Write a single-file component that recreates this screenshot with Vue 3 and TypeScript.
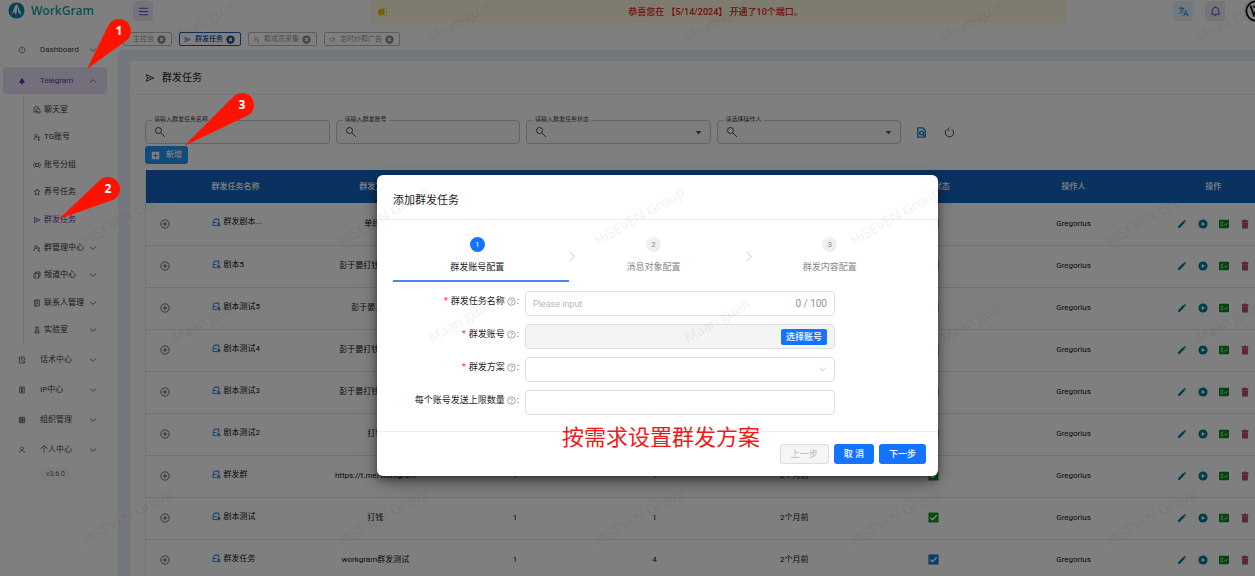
<script setup lang="ts">
import { ref } from 'vue'

interface MenuItem { text: string; icon: string; more?: boolean; active?: boolean }
interface Task { name: string; plan: string; accounts: string; targets: string; time: string; done: string }
interface Pin { label: string; tip: [number, number]; centre: [number, number] }

const icons: Record<string, string> = {
  gauge: 'M12 3a9 9 0 1 0 0.1 0M12 7v6',
  chat: 'M16 17H6l-3 3V10a7 7 0 0 1 14-2M9 14a6 6 0 0 1 12 0v7h-6a6 6 0 0 1-6-7',
  users: 'M9 4a4 4 0 1 0 .1 0M3 21v-3a5 5 0 0 1 9-3M17 11a2 2 0 1 0 .1 0M14 21h7M17 16v5',
  group: 'M2 3l7 6M22 3l-7 6M2 21l7-6M22 21l-7-6M8 8h8v8H8zM2 9v6M22 9v6',
  star: 'M12 3l2.800 6 6.200.8-4.600 4.400 1.200 6.300L12 17.400 6.400 20.500l1.200-6.300L3 9.800 9.200 9z',
  send: 'M3 4l18 8-18 8 3-8zM6 12h8',
  copy: 'M8 7V3h13v14h-4M3 7h14v14H3zM7 11v6',
  book: 'M5 3h14v18H5zM9 3v18M12 8h4M12 13h4',
  flask: 'M8 3h8M9 3v7L5 21h14l-4-11V3M8 15h8',
  script: 'M4 3h15v9M4 3v18h8M8 8h7M8 12h4M17 14a3 3 0 1 0 .1 0M13 21h8',
  ip: 'M5 3h14v18H5zM8 8h8M8 12h8M8 16h8M12 3v18',
  org: 'M4 4h16v16H4zM4 9h16M4 14h16M9 4v16M14 4v16',
  person: 'M12 3a4.500 4.500 0 1 0 .1 0M5 21c0-5 3-8 7-8s7 3 7 8',
  ad: 'M3 9h4l9-5v16l-9-5H3zM19 9v6',
}

const children: MenuItem[] = [
  { text: '聊天室', icon: 'chat' },
  { text: 'TG账号', icon: 'users' },
  { text: '账号分组', icon: 'group' },
  { text: '养号任务', icon: 'star' },
  { text: '群发任务', icon: 'send', active: true },
  { text: '群管理中心', icon: 'users', more: true },
  { text: '频道中心', icon: 'copy', more: true },
  { text: '联系人管理', icon: 'book', more: true },
  { text: '实验室', icon: 'flask', more: true },
]
const sections: MenuItem[] = [
  { text: '话术中心', icon: 'script' },
  { text: 'IP中心', icon: 'ip' },
  { text: '组织管理', icon: 'org' },
  { text: '个人中心', icon: 'person' },
]
const tabs: MenuItem[] = [
  { text: '主控台', icon: '' },
  { text: '群发任务', icon: 'send', active: true },
  { text: '群成员采集', icon: 'users' },
  { text: '定时炒群广告', icon: 'ad' },
]
const filters = [
  { id: 'f-name', label: '请输入群发任务名称', select: false },
  { id: 'f-account', label: '请输入群发账号', select: false },
  { id: 'f-state', label: '请输入群发任务状态', select: true },
  { id: 'f-operator', label: '请选择操作人', select: true },
]
const heads = ['群发方案', '账号数量', '对象数量', '创建时间', '任务状态', '操作人', '操作']
const task = (name: string, plan: string, targets = '1', done = 'green'): Task =>
  ({ name, plan, accounts: '1', targets, time: '2个月前', done })
const tasks: Task[] = [
  task('群发剧本...', '单线...'),
  task('剧本5', '彭于晏打钱打钱打钱'),
  task('剧本测试5', '彭于晏，打钱'),
  task('剧本测试4', '彭于晏打钱打钱打钱'),
  task('剧本测试3', '彭于晏打钱打钱打钱'),
  task('剧本测试2', '打钱'),
  task('群发群', 'https://t.me/workgram'),
  task('剧本测试', '打钱'),
  task('群发任务', 'workgram群发测试', '4', 'blue'),
]
const steps = ['群发账号配置', '消息对象配置', '群发内容配置']

const taskName = ref('')
const limit = ref('')

const pins: Pin[] = [
  { label: '1', tip: [87, 69], centre: [119, 31] },
  { label: '2', tip: [59, 219], centre: [108, 189] },
  { label: '3', tip: [184, 146], centre: [242, 105] },
]
// Teardrop: two tangents from the tip, closed by the far arc of the circle.
function pinPath({ tip, centre }: Pin, r = 12): string {
  const dx = tip[0] - centre[0]
  const dy = tip[1] - centre[1]
  const base = Math.atan2(dy, dx)
  const spread = Math.acos(r / Math.hypot(dx, dy))
  const at = (a: number) => `${centre[0] + r * Math.cos(a)} ${centre[1] + r * Math.sin(a)}`
  return `M${tip[0]} ${tip[1]}L${at(base + spread)}A${r} ${r} 0 1 1 ${at(base - spread)}Z`
}
</script>

<template>
  <div class="app">
    <header class="topbar">
      <a href="#" class="brand">
        <svg class="logo" viewBox="0 0 18 18"><circle cx="9" cy="9" r="8.500" fill="#0d84ae" /><path d="M3.500 14L8 3h2.500l-2 11-2-4zM10 3l4.500 10.500-3.500-2z" fill="#fff" /></svg>
        <span>WorkGram</span>
      </a>
      <button class="square violet" aria-label="菜单"><svg viewBox="0 0 24 24" class="line"><path d="M2 5h20M2 12h20M2 19h20" /></svg></button>
      <div class="notice">
        <svg viewBox="0 0 24 24"><path d="M2 9l4-3h4l5-2v15l-5-2H8v3H5v-4H2z" fill="#f0bd00" /><path d="M18 6l3-2M18 12h4M18 18l3 2" stroke="#f0bd00" stroke-width="2" /></svg>
        <p>恭喜您在 【5/14/2024】 开通了10个端口。</p>
      </div>
      <div class="tools">
        <button class="square blue" aria-label="语言"><svg viewBox="0 0 24 24" class="line"><path d="M2 5h12M8 2v3M12 5c-1 5-5 9-9 11M5 8c1 4 4 6 7 8M12 22l5-12 5 12M14 18h6" /></svg></button>
        <button class="square violet" aria-label="通知"><svg viewBox="0 0 24 24" class="line"><path d="M3 18h18l-2-3V10a7 7 0 0 0-14 0v5zM10 21h4M12 1v2" /></svg></button>
        <button class="avatar" aria-label="账户"><svg viewBox="0 0 24 24"><circle cx="12" cy="12" r="10.500" fill="#fff" stroke="#111" stroke-width="2" /><path d="M6 6l4 12M9 8c4-3 6 1 3 4s1 6 4 4" fill="none" stroke="#111" stroke-width="2" /></svg></button>
      </div>
    </header>

    <nav class="tabs">
      <a v-for="t in tabs" :key="t.text" href="#" class="tab" :class="{ on: t.active }">
        <svg v-if="t.icon" viewBox="0 0 24 24" class="line"><path :d="icons[t.icon]" /></svg>
        <span>{{ t.text }}</span>
        <svg class="close" viewBox="0 0 24 24"><circle cx="12" cy="12" r="11" fill="currentColor" /><path d="M8 8l8 8M16 8l-8 8" stroke="#fff" stroke-width="3" /></svg>
      </a>
    </nav>

    <div class="body">
      <aside class="side">
        <a href="#" class="item"><svg viewBox="0 0 24 24" class="line"><path :d="icons.gauge" /></svg><span>Dashboard</span><svg viewBox="0 0 24 24" class="line chev"><path d="M3 8l9 8 9-8" /></svg></a>
        <a href="#" class="item on"><svg viewBox="0 0 24 24"><path d="M12 2l6 9 2 7H4l2-7zM9 19h6v3H9z" fill="currentColor" /></svg><span>Telegram</span><svg viewBox="0 0 24 24" class="line chev"><path d="M3 16l9-8 9 8" /></svg></a>
        <div class="children">
          <a v-for="c in children" :key="c.text" href="#" class="child" :class="{ on: c.active }">
            <svg viewBox="0 0 24 24" class="line"><path :d="icons[c.icon]" /></svg><span>{{ c.text }}</span>
            <svg v-if="c.more" viewBox="0 0 24 24" class="line chev"><path d="M3 8l9 8 9-8" /></svg>
          </a>
        </div>
        <a v-for="s in sections" :key="s.text" href="#" class="item">
          <svg viewBox="0 0 24 24" class="line"><path :d="icons[s.icon]" /></svg><span>{{ s.text }}</span>
          <svg viewBox="0 0 24 24" class="line chev"><path d="M3 8l9 8 9-8" /></svg>
        </a>
        <span class="version">v3.6.0</span>
      </aside>

      <main class="main">
        <section class="card">
          <h1 class="title"><svg viewBox="0 0 24 24" class="line"><path :d="icons.send" /></svg>群发任务</h1>
          <div class="content">
            <form class="filters" @submit.prevent>
              <div v-for="f in filters" :key="f.id" class="filter">
                <label :for="f.id">{{ f.label }}</label>
                <svg viewBox="0 0 24 24" class="line"><circle cx="9" cy="9" r="6" /><path d="M14 14l8 8" /></svg>
                <select v-if="f.select" :id="f.id"><option></option></select>
                <input v-else :id="f.id" type="text" />
                <svg v-if="f.select" class="caret" viewBox="0 0 10 10"><path d="M1 3h8L5 8z" fill="#555" /></svg>
              </div>
              <button class="plain find" aria-label="搜索"><svg viewBox="0 0 24 24"><path d="M5 2h10l5 5v15H4V2z" fill="none" stroke="#1583c7" stroke-width="3" /><circle cx="12" cy="13" r="4" fill="none" stroke="#1583c7" stroke-width="3" /><path d="M15 16l5 5" stroke="#1583c7" stroke-width="3" /></svg></button>
              <button class="plain" aria-label="重置"><svg viewBox="0 0 24 24" class="line"><path d="M7 5a9 9 0 1 0 10 0M12 1L8 5l4 4" /></svg></button>
            </form>
            <button class="add"><svg viewBox="0 0 24 24"><path d="M2 2h20v20H2z" fill="#fff" /><path d="M12 7v10M7 12h10" stroke="#2196f3" stroke-width="3" /></svg>新增</button>
            <div class="scroll">
              <table>
                <colgroup><col class="c-open" /><col class="c-name" /><col v-for="h in heads" :key="h" /></colgroup>
                <thead><tr><th></th><th class="name">群发任务名称</th><th v-for="h in heads" :key="h">{{ h }}</th></tr></thead>
                <tbody>
                  <tr v-for="(t, i) in tasks" :key="i">
                    <td><button class="plain open" aria-label="展开"><svg viewBox="0 0 24 24" class="line"><circle cx="12" cy="12" r="10" /><path d="M12 7v10M7 12h10" /></svg></button></td>
                    <td class="name"><div><svg viewBox="0 0 24 24"><path d="M6 3h12v9M3 12v8h10M6 3L3 12h9" fill="none" stroke="#4c8be0" stroke-width="3" /><path d="M14 13h7l2 9h-9z" fill="#4c8be0" /></svg>{{ t.name }}</div></td>
                    <td>{{ t.plan }}</td>
                    <td>{{ t.accounts }}</td>
                    <td>{{ t.targets }}</td>
                    <td>{{ t.time }}</td>
                    <td><svg class="state" :class="t.done" viewBox="0 0 24 24"><rect x="1" y="1" width="22" height="22" rx="2" fill="currentColor" /><path d="M5 12l5 5 9-10" fill="none" stroke="#fff" stroke-width="3" /></svg></td>
                    <td>Gregorius</td>
                    <td>
                      <div class="actions">
                        <button class="plain" aria-label="编辑"><svg viewBox="0 0 24 24"><path d="M2 22l1-5L15 5l4 4L7 21zM16 4l2-2 4 4-2 2z" fill="#007a94" /></svg></button>
                        <button class="plain" aria-label="启动"><svg viewBox="0 0 24 24"><circle cx="12" cy="12" r="11" fill="#007a94" /><path d="M9 7l8 5-8 5z" fill="#fff" /></svg></button>
                        <button class="plain" aria-label="明细"><svg viewBox="0 0 24 24"><rect y="2" width="24" height="20" rx="2" fill="#008a1c" /><path d="M4 8h6M4 12h6M4 16h6M13 12l3 3 5-6" fill="none" stroke="#cfe8cf" stroke-width="2" /></svg></button>
                        <button class="plain" aria-label="删除"><svg viewBox="0 0 24 24"><path d="M4 3h5l1-2h4l1 2h5v4H4zM5 8h14v15H5z" fill="#b8486a" /></svg></button>
                      </div>
                    </td>
                  </tr>
                </tbody>
              </table>
            </div>
          </div>
        </section>
      </main>
    </div>

    <div class="mask">
      <div class="dialog" role="dialog" aria-labelledby="dialog-title">
        <h2 id="dialog-title">添加群发任务</h2>
        <ol class="steps">
          <li v-for="(s, i) in steps" :key="s" :class="{ on: i === 0 }">
            <b>{{ i + 1 }}</b><span>{{ s }}</span>
            <svg v-if="i < 2" viewBox="0 0 10 16"><path d="M2 2l6 6-6 6" /></svg>
          </li>
        </ol>
        <form class="form" @submit.prevent>
          <label for="d-name"><i>*</i>群发任务名称<svg viewBox="0 0 24 24" class="line"><circle cx="12" cy="12" r="10" /><path d="M9 10a3 3 0 1 1 3 3v1M12 16v2" /></svg>:</label>
          <div class="field"><input id="d-name" v-model="taskName" type="text" maxlength="100" placeholder="Please input" /><span class="count">{{ taskName.length }} / 100</span></div>
          <label for="d-account"><i>*</i>群发账号<svg viewBox="0 0 24 24" class="line"><circle cx="12" cy="12" r="10" /><path d="M9 10a3 3 0 1 1 3 3v1M12 16v2" /></svg>:</label>
          <div class="field off"><input id="d-account" type="text" disabled /><button class="pick" type="button">选择账号</button></div>
          <label for="d-plan"><i>*</i>群发方案<svg viewBox="0 0 24 24" class="line"><circle cx="12" cy="12" r="10" /><path d="M9 10a3 3 0 1 1 3 3v1M12 16v2" /></svg>:</label>
          <div class="field"><select id="d-plan"><option></option></select><svg class="drop" viewBox="0 0 24 24"><path d="M4 7l8 9 8-9" /></svg></div>
          <label for="d-limit">每个账号发送上限数量<svg viewBox="0 0 24 24" class="line"><circle cx="12" cy="12" r="10" /><path d="M9 10a3 3 0 1 1 3 3v1M12 16v2" /></svg>:</label>
          <div class="field"><input id="d-limit" v-model="limit" type="text" /></div>
        </form>
        <footer>
          <button disabled>上一步</button>
          <button>取 消</button>
          <button>下一步</button>
        </footer>
        <p class="remark">按需求设置群发方案</p>
      </div>
    </div>

    <svg class="overlay" aria-hidden="true">
      <defs>
        <pattern id="mark" width="256" height="300" patternUnits="userSpaceOnUse">
          <text transform="translate(86 246) rotate(-30)">HiSEVEN Group</text>
          <text transform="translate(176 43) rotate(-30)">Maan guan</text>
        </pattern>
      </defs>
      <rect width="100%" height="100%" fill="url(#mark)" />
      <g v-for="p in pins" :key="p.label" class="pin">
        <path :d="pinPath(p)" />
        <text :x="p.centre[0]" :y="p.centre[1] + 4">{{ p.label }}</text>
      </g>
    </svg>
  </div>
</template>

<style>
body { margin: 0; overflow: hidden; }
</style>

<style scoped>
* { box-sizing: border-box; }
.app { position: relative; display: flex; flex-direction: column; height: 100vh; overflow: hidden; background: #fff; color: #222; font: 8px/12px Roboto, "Noto Sans CJK SC", sans-serif; }
a { color: inherit; text-decoration: none; }
button { font: inherit; border: 0; padding: 0; cursor: pointer; }
input, select { font: inherit; flex: 1; min-width: 0; height: 100%; padding: 0; border: 0; outline: 0; background: transparent; appearance: none; }
svg { width: 9px; height: 9px; flex: none; }
.line { fill: none; stroke: currentColor; stroke-width: 2; }
.plain { display: grid; place-items: center; background: none; color: #333; }

.topbar { display: flex; align-items: flex-start; flex: none; height: 28px; }
.brand { display: flex; align-items: center; gap: 6px; width: 125px; height: 21px; padding-left: 8px; color: #14a394; font: 600 12px/20px "Open Sans", sans-serif; }
.logo { width: 17px; height: 17px; }
.square { display: grid; place-items: center; width: 20px; height: 20px; margin-top: 1px; border-radius: 4px; }
.square svg { width: 11px; height: 11px; }
.violet { color: #6a35b8; background: #ede7f6; }
.blue { color: #1e7fdc; background: #e3f2fd; }
.topbar > .square { margin-left: 8px; }
.notice { display: flex; align-items: center; flex: 1; height: 23px; margin-left: 218px; padding: 0 6px; background: #fdf8dc; color: #e82020; font-size: 9px; font-weight: 500; }
.notice svg { width: 12px; height: 12px; }
.notice p { flex: 1; margin: 0 18px 0 0; text-align: center; }
.tools { display: flex; gap: 12px; width: 189px; padding-left: 107px; }
.tools .square { flex: none; }
.avatar { flex: none; width: 24px; height: 22px; background: #e3f2fd; margin-left: 7px; border-radius: 8px; }
.avatar svg { width: 24px; height: 22px; }

.tabs { display: flex; gap: 7px; flex: none; height: 22px; padding: 4px 0 4px 123px; font-size: 7px; color: #999; }
.tab { display: flex; align-items: center; gap: 4px; height: 14px; padding: 0 5px 0 4px; border: 1px solid #bbb; border-radius: 2px; }
.tab:first-child { padding-left: 9px; }
.tab svg { width: 7px; height: 7px; }
.tab .close { width: 9px; height: 9px; margin-left: -1px; color: #888; }
.tab.on, .tab.on .close { color: #124e96; border-color: #1f5fae; }
.tab.on { font-weight: 500; }

.body { display: flex; flex: 1; min-height: 0; }
.side { display: flex; flex-direction: column; flex: none; width: 118px; margin-top: -15px; padding: 0 11px 0 3px; color: #444; }
.item { display: grid; grid-template-columns: 22px 1fr 8px; align-items: center; flex: none; height: 30px; padding: 0 10px 0 15px; border-radius: 4px; }
.item svg { width: 8px; height: 8px; }
.item.on { height: 27px; margin-top: 2px; color: #5e35b1; background: #e6def6; }
.children { display: grid; grid-auto-rows: 1fr; flex: none; height: 248px; margin: 2px 0 1px 20px; border-left: 1px solid #e6e0f0; }
.child { display: grid; grid-template-columns: 8px 1fr 8px; align-items: center; gap: 3px; padding: 0 10px 0 9px; white-space: nowrap; color: #333; }
.child svg { width: 8px; height: 8px; }
.child.on { color: #5e35b1; }
.version { align-self: flex-start; flex: none; margin: 3px 0 0 37px; padding: 0 6px; border-radius: 6px; background: #f8f8fa; color: #666; font-size: 7px; }

.main { flex: 1; min-width: 0; padding: 11px 0 0 12px; background: #e9eef6; border-top-left-radius: 4px; }
.card { height: 100%; background: #fff; border-top-left-radius: 4px; }
.title { display: flex; align-items: center; gap: 7px; height: 34px; margin: 0; padding-left: 15px; border-bottom: 1px solid #eceef0; font-size: 10px; font-weight: 400; }
.title svg { width: 10px; height: 10px; }
.content { padding: 25px 0 0 15px; }
.filters { display: flex; align-items: center; gap: 6px; margin-right: 290px; }
.filter { position: relative; display: flex; align-items: center; flex: 1; height: 24px; padding: 0 8px; border: 1px solid #c4c8cf; border-radius: 4px; background: #fafbfd; }
.filter > svg { width: 12px; height: 12px; color: #444; }
.filter > .caret { width: 7px; height: 7px; }
.filter label { position: absolute; top: -7px; left: 6px; padding: 0 2px; background: linear-gradient(#fff 60%, #fafbfd 60%); color: #444; font-size: 6px; line-height: 10px; white-space: nowrap; }
.filters > .plain { flex: none; width: 12px; height: 12px; margin-right: 10px; }
.filters > .plain svg { width: 11px; height: 11px; }
.filters .find { margin-left: 8px; }
.add { display: flex; align-items: center; gap: 6px; height: 18px; margin-top: 2px; padding: 0 6px; border-radius: 3px; background: #2196f3; color: #fff; font-weight: 500; }
.scroll { margin-top: 6px; overflow: hidden; }
table { width: calc(100% + 28px); border-collapse: collapse; table-layout: fixed; border-left: 1px solid #e8eaec; }
.c-open { width: 38px; }
.c-name { width: 122px; }
th { height: 33px; padding: 0; background: #1565c0; color: #fff; font-weight: 500; }
td { height: 42px; padding: 0; border-bottom: 1px solid #e4e4e8; text-align: center; color: #111; }
td svg, .plain svg { vertical-align: middle; }
.name { padding-left: 28px; text-align: left; }
.name div { display: flex; align-items: center; gap: 3px; padding-bottom: 3px; }
.open { width: 100%; color: #444466; }
.open svg { width: 10px; height: 10px; }
.state { width: 11px; height: 11px; }
.state.green { color: #0a9a1e; }
.state.blue { color: #1976d2; }
.actions { display: flex; justify-content: center; gap: 11px; }
.actions svg { width: 10px; height: 10px; }

.mask { position: absolute; inset: 0; display: flex; align-items: flex-start; justify-content: center; padding: 175px 0 0 60px; background: rgba(0, 0, 0, 0.5); }
.dialog { position: relative; width: 561px; border-radius: 6px; background: #fff; box-shadow: 0 6px 16px rgba(0, 0, 0, 0.4), 0 3px 6px rgba(0, 0, 0, 0.3); }
.dialog h2 { height: 45px; margin: 0; padding: 0 16px; border-bottom: 1px solid #eee; font-size: 11px; font-weight: 400; line-height: 52px; }
.steps { display: flex; margin: 0 16px; padding: 16px 0 0; list-style: none; }
.steps li { position: relative; display: flex; flex: 1; flex-direction: column; align-items: center; height: 46px; padding-right: 8px; color: #888; font-size: 9px; }
.steps b { width: 15px; height: 15px; margin: 1px 0 9px; border-radius: 50%; background: #f0f0f0; font-size: 8px; font-weight: 400; line-height: 15px; text-align: center; }
.steps .on { border-bottom: 2px solid #4c84f5; color: #222; }
.steps .on b { background: #1473ff; color: #fff; }
.steps svg { position: absolute; top: 14px; right: -7px; width: 8px; height: 13px; fill: none; stroke: #bbb; stroke-width: 1; }
.form { display: grid; grid-template-columns: 142px 310px; gap: 8px 6px; padding: 9px 0 16px; font-size: 9px; }
.form label { display: flex; align-items: center; justify-content: flex-end; height: 20px; white-space: nowrap; }
.form label i { margin-right: 3px; color: #f33; font-style: normal; }
.form label svg { margin: 0 1px 0 2px; color: #888; }
.field { display: flex; align-items: center; height: 25px; padding: 0 7px; border: 1px solid #dcdfe6; border-radius: 4px; }
.field.off { background: #f4f4f4; }
.field input::placeholder { color: #b4b8c0; opacity: 1; }
.field input { font-size: 9px; }
.count { color: #909399; font-size: 10px; }
.pick { height: 16px; padding: 0 5px; border-radius: 2px; background: #1473ff; color: #fff; font-weight: 500; }
.drop { fill: none; stroke: #bbb; stroke-width: 2; }
footer { display: flex; justify-content: flex-end; gap: 5px; height: 45px; padding: 12px 12px 0; border-top: 1px solid #eee; font-size: 9px; }
footer button { height: 20px; padding: 0 10px; border-radius: 3px; background: #1473ff; color: #fff; font-weight: 500; }
footer button:disabled { border: 1px solid #ddd; background: #f5f5f5; color: #bbb; font-weight: 400; }
.remark { position: absolute; bottom: 24px; left: 185px; margin: 0; color: #f01818; font: 22px/28px "Liberation Serif", "Noto Sans CJK SC", serif; white-space: nowrap; }

.overlay { position: absolute; inset: 0; width: 100%; height: 100%; pointer-events: none; }
.overlay pattern text { fill: #000; fill-opacity: 0.06; font: 14px "Open Sans", sans-serif; }
.pin path { fill: #ff1200; }
.pin text { fill: #fff; font: 700 12px "Open Sans", sans-serif; text-anchor: middle; }
</style>
